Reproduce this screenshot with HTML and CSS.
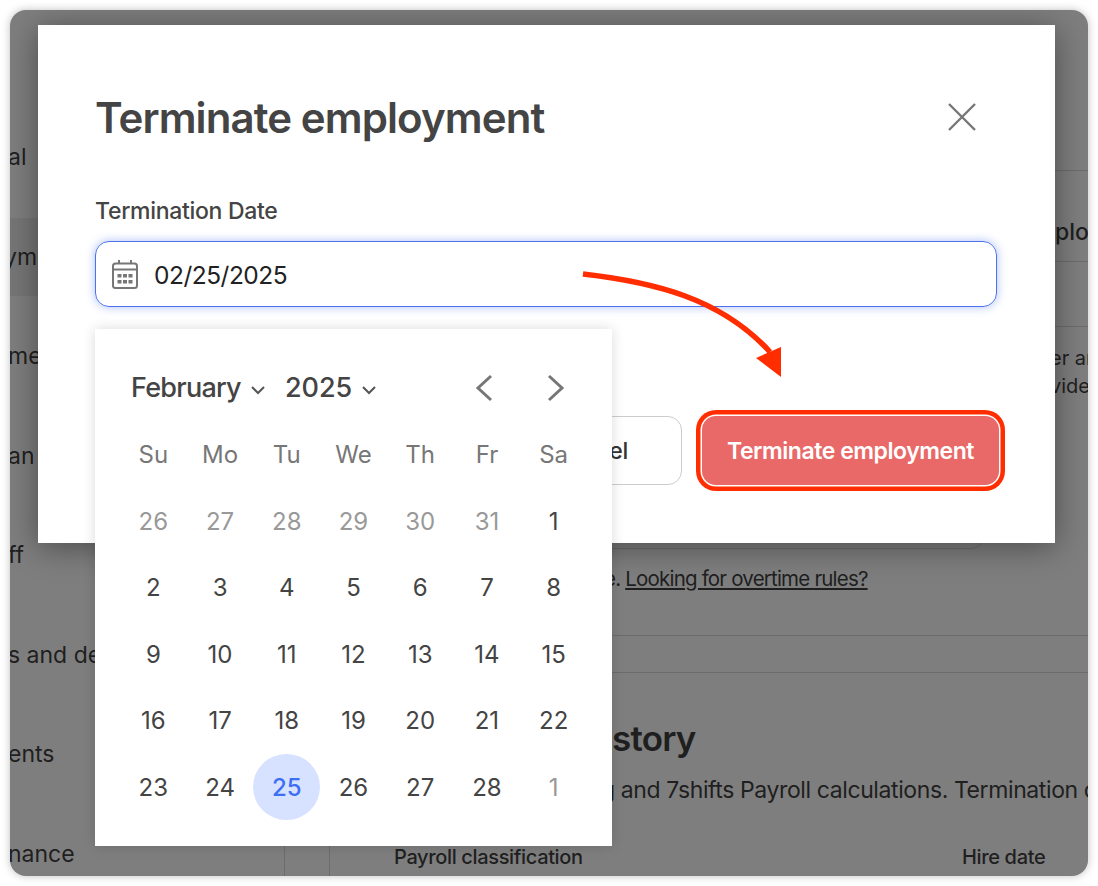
FILE: index.html
```html
<!DOCTYPE html>
<html lang="en">
<head>
  <meta charset="UTF-8">
  <meta name="viewport" content="width=device-width, initial-scale=1.0">
  <title>Terminate employment</title>
  <link rel="stylesheet" href="styles.css">
</head>
<body>
  <div class="window">

    <!-- Page behind the dialog -->
    <div class="sidebar">
      <div class="side-item">al</div>
      <div class="side-item active">yme</div>
      <div class="side-item">me</div>
      <div class="side-item">an</div>
      <div class="side-item">ff</div>
      <div class="side-item">s and de</div>
      <div class="side-item">ents</div>
      <div class="side-item">nance</div>
    </div>

    <div class="main">
      <div class="main-head"></div>
      <div class="main-tab">ploy</div>
      <div class="main-note"></div>
      <div class="policy">
        <div class="policy-box"></div>
        <div class="policy-text">er an<br>vider</div>
      </div>
      <div class="rules">e. <a href="#">Looking for overtime rules?</a></div>
      <div class="main-gap"></div>
      <h2 class="history-title">story</h2>
      <p class="history-text">g and 7shifts Payroll calculations. Termination of</p>
      <div class="history-head">
        <span>Payroll classification</span>
        <span>Hire date</span>
      </div>
    </div>

    <!-- Dialog -->
    <div class="modal">
      <div class="modal-head">
        <h1>Terminate employment</h1>
        <button class="close-btn" aria-label="Close">
          <svg width="30" height="30" viewBox="0 0 30 30"><path d="M2 2 L28 28 M28 2 L2 28"/></svg>
        </button>
      </div>

      <label class="field-label">Termination Date</label>
      <div class="date-input">
        <svg class="cal-icon" width="26" height="30" viewBox="0 0 26 30">
          <rect x="1" y="4.5" width="24" height="24.5" rx="2.5" class="cal-line"/>
          <path d="M1 10.5 H25 M7 1 V4.5 M19 1 V4.5" class="cal-line"/>
          <g class="cal-dots">
            <rect x="5.5" y="15" width="4" height="3.5"/><rect x="11" y="15" width="4" height="3.5"/><rect x="16.5" y="15" width="4" height="3.5"/>
            <rect x="5.5" y="21" width="4" height="3.5"/><rect x="11" y="21" width="4" height="3.5"/><rect x="16.5" y="21" width="4" height="3.5"/>
          </g>
        </svg>
        <span class="date-value">02/25/2025</span>
      </div>

      <div class="modal-foot">
        <button class="btn btn-cancel">Cancel</button>
        <button class="btn btn-danger">Terminate employment</button>
      </div>
    </div>

    <!-- Date picker -->
    <div class="calendar">
      <div class="cal-head">
        <span class="cal-select">February
          <svg width="16" height="10" viewBox="0 0 16 10"><path d="M2 2 L8 8 L14 2"/></svg>
        </span>
        <span class="cal-select cal-year">2025
          <svg width="16" height="10" viewBox="0 0 16 10"><path d="M2 2 L8 8 L14 2"/></svg>
        </span>
        <span class="cal-nav">
          <svg width="18" height="28" viewBox="0 0 18 28"><path d="M16 2 L3 14 L16 26"/></svg>
          <svg width="18" height="28" viewBox="0 0 18 28"><path d="M2 2 L15 14 L2 26"/></svg>
        </span>
      </div>
      <div class="cal-grid">
        <span class="wd">Su</span><span class="wd">Mo</span><span class="wd">Tu</span><span class="wd">We</span><span class="wd">Th</span><span class="wd">Fr</span><span class="wd">Sa</span>
        <span class="off">26</span><span class="off">27</span><span class="off">28</span><span class="off">29</span><span class="off">30</span><span class="off">31</span><span>1</span>
        <span>2</span><span>3</span><span>4</span><span>5</span><span>6</span><span>7</span><span>8</span>
        <span>9</span><span>10</span><span>11</span><span>12</span><span>13</span><span>14</span><span>15</span>
        <span>16</span><span>17</span><span>18</span><span>19</span><span>20</span><span>21</span><span>22</span>
        <span>23</span><span>24</span><span class="selected">25</span><span>26</span><span>27</span><span>28</span><span class="off">1</span>
      </div>
    </div>

    <!-- Red annotation arrow -->
    <svg class="arrow" width="220" height="120" viewBox="0 0 220 120">
      <path class="arrow-line" d="M2 4 C72 12 140 28 189 82"/>
      <path class="arrow-head" d="M200 77 L200 107 L175 88 Z"/>
    </svg>
  </div>
</body>
</html>
```

FILE: styles.css
```css
* {
  box-sizing: border-box;
}
body {
  margin: 0;
  height: 886px;
  overflow: hidden;
  background: #fff;
  font-family: Inter, "Liberation Sans", sans-serif;
}
.window {
  position: relative;
  display: flex;
  width: 1078px;
  height: 866px;
  margin: 10px;
  overflow: hidden;
  border-radius: 16px;
  background: #7e7e7e;
  color: #1f1f1f;
  font-size: 23px;
  box-shadow: 0 0 8px rgba(0, 0, 0, 0.25);
}

/* background page */
.sidebar {
  flex: none;
  width: 275px;
  margin-top: 20px;
  padding-top: 88px;
  border-right: 1px solid #6c6c6c;
  white-space: nowrap;
}
.side-item {
  display: flex;
  align-items: center;
  height: 78px;
  margin-bottom: 21.5px;
  margin-left: -2px;
}
.side-item.active {
  margin-left: -6px;
  background: #767676;
}
.main {
  flex: 1;
  min-width: 0;
  margin: 20px 0 0 44px;
  border-left: 1px solid #6c6c6c;
  white-space: nowrap;
  overflow: hidden;
}
.main-head {
  height: 141px;
  border-bottom: 1px solid #6c6c6c;
}
.main-tab {
  height: 91px;
  padding: 47px 0 0 725px;
  font-weight: 500;
  line-height: 28px;
  border-bottom: 1px solid #6c6c6c;
}
.main-note {
  height: 65px;
  border-bottom: 1px solid #6c6c6c;
}
.policy {
  display: flex;
  height: 222px;
}
.policy-box {
  flex: none;
  align-self: flex-end;
  width: 655px;
  height: 200px;
  border: 1px solid #6c6c6c;
  border-radius: 14px;
}
.policy-text {
  flex: none;
  padding: 17px 0 0 65px;
  font-size: 20px;
  line-height: 28px;
}
.rules {
  height: 87px;
  padding: 16px 0 0 274px;
  line-height: 28px;
  font-size: 20.5px;
  letter-spacing: -0.8px;
  border-bottom: 1px solid #6c6c6c;
}
.rules a {
  color: inherit;
}
.main-gap {
  height: 37px;
  border-bottom: 1px solid #6c6c6c;
}
.history-title {
  margin: 43px 0 0;
  padding-left: 282px;
  font-size: 35px;
  font-weight: 600;
  letter-spacing: -0.8px;
  line-height: 44px;
}
.history-text {
  margin: 16px 0 0;
  padding-left: 271px;
  line-height: 28px;
  letter-spacing: -0.4px;
}
.history-head {
  display: grid;
  grid-template-columns: 568px auto;
  margin-top: 39px;
  padding-left: 64px;
  font-size: 20px;
  font-weight: 500;
  letter-spacing: -0.35px;
  line-height: 28px;
}

/* dialog */
.modal {
  position: absolute;
  left: 28px;
  top: 15px;
  width: 1017px;
  height: 518px;
  padding: 0 58px 0 57px;
  background: #fff;
  color: #444;
  box-shadow: 0 4px 30px rgba(0, 0, 0, 0.4);
}
.modal-head {
  display: flex;
  align-items: center;
  justify-content: space-between;
  height: 184px;
}
.modal-head h1 {
  margin: 0;
  font-size: 42px;
  font-weight: 600;
  letter-spacing: -0.9px;
}
.close-btn {
  display: flex;
  margin-right: 20px;
  padding: 0;
  border: 0;
  background: none;
}
.close-btn path {
  fill: none;
  stroke: #777;
  stroke-width: 2.4;
}
.field-label {
  display: block;
  font-size: 23px;
  font-weight: 500;
  line-height: 28px;
  margin-top: -12px;
  letter-spacing: -0.3px;
}
.date-input {
  display: flex;
  align-items: center;
  gap: 16px;
  height: 66px;
  margin-top: 16px;
  padding-left: 16px;
  border: 1px solid #4a72ee;
  border-radius: 14px;
  color: #222;
  font-size: 24.5px;
  letter-spacing: -0.5px;
  box-shadow: 0 0 10px rgba(74, 114, 238, 0.45);
}
.date-value {
  padding-top: 2px;
}
.cal-line {
  fill: none;
  stroke: #777;
  stroke-width: 2;
}
.cal-dots {
  fill: #777;
}
.modal-foot {
  display: flex;
  justify-content: flex-end;
  gap: 20px;
  margin: 109px -2px 0 0;
}
.btn {
  height: 69px;
  border-radius: 14px;
  font-family: inherit;
  font-size: 23px;
  font-weight: 500;
  letter-spacing: -0.3px;
}
.btn-cancel {
  padding: 0 53px;
  border: 1px solid #ccc;
  background: #fff;
  color: #333;
}
.btn-danger {
  width: 297px;
  border: 0;
  background: #e96969;
  color: #fff;
  font-weight: 600;
  letter-spacing: -0.45px;
  box-shadow: 0 0 0 1.5px #fff, 0 0 0 6px #ff2d00;
}

/* date picker */
.calendar {
  position: absolute;
  left: 85px;
  top: 319px;
  width: 517px;
  height: 517px;
  padding: 25px;
  background: #fff;
  color: #444;
  box-shadow: 0 0 12px rgba(0, 0, 0, 0.15);
}
.cal-head {
  display: flex;
  align-items: center;
  gap: 19px;
  height: 67px;
  padding: 0 22px 0 11px;
  font-size: 27px;
  font-weight: 500;
  letter-spacing: -0.75px;
}
.cal-select {
  display: flex;
  align-items: center;
  gap: 9px;
}
.cal-year {
  letter-spacing: 0;
}
.cal-select svg {
  margin-top: 4px;
}
.cal-select path {
  fill: none;
  stroke: #555;
  stroke-width: 2;
}
.cal-nav {
  display: flex;
  gap: 54px;
  margin-left: auto;
}
.cal-nav path {
  fill: none;
  stroke: #777;
  stroke-width: 3;
}
.cal-grid {
  display: grid;
  grid-template-columns: repeat(7, 1fr);
  grid-auto-rows: 66.5px;
  font-size: 24px;
}
.cal-grid span {
  display: flex;
  align-items: center;
  justify-content: center;
  padding-top: 1px;
}
.cal-grid .wd {
  color: #777;
}
.cal-grid .off {
  color: #999;
}
.cal-grid .selected {
  border-radius: 50%;
  background: #d6e2ff;
  color: #3d6ef5;
  font-weight: 500;
}

/* annotation */
.arrow {
  position: absolute;
  left: 571px;
  top: 260px;
}
.arrow-line {
  fill: none;
  stroke: #ff2d00;
  stroke-width: 5.5;
}
.arrow-head {
  fill: #ff2d00;
}
```
